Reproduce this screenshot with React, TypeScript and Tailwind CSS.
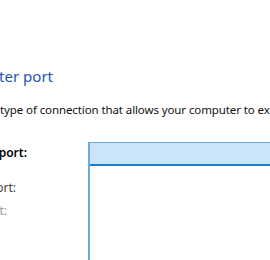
export default function App() {
  const font = { fontFamily: '"Segoe UI", "Noto Sans", "Open Sans", sans-serif' };
  return (
    <div className="w-[270px] h-[260px] overflow-hidden bg-white flex flex-col" style={font}>
      <div className="pt-[66px] flex">
        <div className="w-[53px] flex justify-end whitespace-nowrap text-[15px] leading-[20px] text-[#1c56b8]">
          Choose a printer port
        </div>
      </div>
      <div className="mt-[16px] flex whitespace-nowrap text-[11.5px] leading-[16px] tracking-[-0.1px] text-[#111111]">
        <span className="w-0 flex justify-end">A printer port is a&nbsp;</span>
        <span>type of connection that allows your computer to exchange information with a printer.</span>
      </div>
      <div className="mt-[24px] flex flex-1">
        <div className="w-[88px] flex flex-col pt-[3px] text-[12px] leading-[16px] whitespace-nowrap">
          <div className="w-[27px] flex justify-end font-semibold text-black">Use an existing port:</div>
          <div className="mt-[19px] w-[16px] flex justify-end text-[#444444]">Create a new port:</div>
          <div className="mt-[7px] w-[7px] flex justify-end text-[#9a9a9a]">Type of port:</div>
        </div>
        <div className="flex-1 flex flex-col border-l-2 border-t border-[#6fa8dc]">
          <div className="h-[23px] bg-[#cce4f7] border-b-2 border-[#1f7bd0]" />
          <div className="flex-1 bg-white" />
        </div>
      </div>
    </div>
  );
}
